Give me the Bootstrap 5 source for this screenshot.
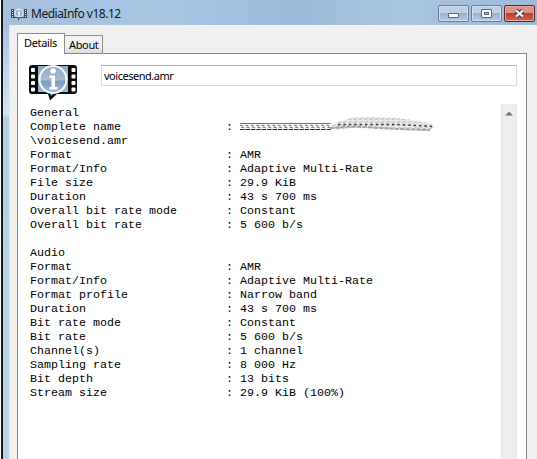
<!DOCTYPE html>
<html lang="en">
<head>
<meta charset="utf-8">
<title>MediaInfo v18.12</title>
<link href="https://cdn.jsdelivr.net/npm/bootstrap@5.3.0/dist/css/bootstrap.min.css" rel="stylesheet">
<style>
body{width:537px;height:459px;font-family:"Noto Sans","Open Sans",sans-serif;color:#000;background:#fff}
.window-frame{height:459px;margin-left:1px;border-left:2px solid #15181f;padding-left:6px;background:linear-gradient(#9fbcdc 0,#a5c0df 25px,#c3d6ec 75px,#d5e3f3 114px,#b4d1e3 117px,#b9d4e7 100%)}
.title-strip{height:25px;margin-left:-6px;padding:0 2px 0 8px;background:linear-gradient(90deg,#a5bfdc,#a8c5e4 28%,#9dbbdc 55%,#a9c4e1 75%,#9dbbd9)}
.title-text{font-size:12px;line-height:16px;margin-left:4px;padding-top:6px;letter-spacing:-.5px;color:#101820}
.caption-buttons{gap:2px;padding-top:5px}
.caption-btn{width:31px;height:17px;border:1px solid #647e9c;border-radius:2px;box-shadow:inset 0 0 0 1px #d0dfef;background:linear-gradient(#bed0e4 48%,#98b2cf 50%,#b5cce4)}
.caption-close{border-color:#5d262b;box-shadow:inset 0 0 0 1px #e6a79c;background:linear-gradient(#dd9487 47%,#bd3e29 50%,#d06a53)}
.client-area{height:434px;background:#f0f0f0;padding:8px 10px 0 7px;border-left:1px solid #e6e8ef}
.tab-strip{height:20px;font-size:11px;line-height:14px;letter-spacing:-.35px}
.sheet-tab{border:1px solid #8b8d90;border-bottom:0}
.tab-details{width:48px;height:21px;background:#fff;padding:2px 0 0 6px;z-index:1}
.tab-about{width:38px;height:18px;margin-top:2px;border-left:0;background:linear-gradient(#f2f2f2 45%,#dedede);padding:2px 0 0 4px}
.sheet{height:406px;border:1px solid #85878a;border-bottom:0;background:#fff;padding:11px 9px 0 11px}
.file-field{width:416px;height:21px;border:1px solid #dcdcdc;border-top-color:#abadb3;border-radius:0;font-size:11px;line-height:18px;padding:0 2px 1px;margin-left:24px;color:#000;letter-spacing:-.47px}
.report-area{height:370px;margin-top:3px}
.report-text{font:11.667px/14px "Liberation Mono","Courier New",monospace;padding:2px 0 0 1px;color:#000}
.report-row{height:14px;white-space:pre}
.report-key{width:196px}
.scroll-track{width:16px;background:#eee;border-left:1px solid #e2e2e2;border-right:1px solid #e7e7e7;padding-top:7px}
.smudge{display:block;margin:-4px 0 0 0}
</style>
<script src="https://cdn.jsdelivr.net/npm/bootstrap@5.3.0/dist/js/bootstrap.bundle.min.js"></script>
</head>
<body class="m-0 overflow-hidden">
<div class="window-frame">
  <header class="title-strip d-flex align-items-start">
    <svg width="16" height="25" viewBox="0 0 16 25" aria-hidden="true">
      <path d="M0 9h16v9H9l-2 3v-3H0z" fill="#414b57"/><path d="M3 9h10v8H3z" fill="#a9b9cd"/>
      <path d="M1.5 10v7M14.5 10v7" stroke="#dfe5ed" stroke-dasharray="1 1"/>
      <ellipse cx="8" cy="13" rx="4" ry="4" fill="#9aacc4" stroke="#e9eef5"/><path d="M8 11v5M8 9v1" stroke="#fff" stroke-width="1.5"/>
    </svg>
    <div class="title-text flex-grow-1">MediaInfo v18.12</div>
    <div class="caption-buttons d-flex">
      <div class="caption-btn d-flex"><svg width="29" height="15"><rect x="9.5" y="7.5" width="10" height="4" rx=".5" fill="#fff" stroke="#5a6577"/></svg></div>
      <div class="caption-btn d-flex"><svg width="29" height="15"><rect x="9.5" y="3.5" width="10" height="8" rx=".5" fill="#fff" stroke="#5a6577"/><rect x="12.5" y="6.5" width="4" height="2" fill="#9fb8d2" stroke="#5a6577"/></svg></div>
      <div class="caption-btn caption-close d-flex"><svg width="29" height="15"><path d="M11 4.5l7 6M18 4.500l-7 6" stroke="#59404d" stroke-width="4.3"/><path d="M11 4.500l7 6M18 4.500l-7 6" stroke="#f5f5f8" stroke-width="2.300"/></svg></div>
    </div>
  </header>
  <main class="client-area">
    <div class="tab-strip d-flex align-items-start">
      <div class="sheet-tab tab-details position-relative">Details</div>
      <div class="sheet-tab tab-about">About</div>
    </div>
    <section class="sheet">
      <div class="d-flex align-items-start">
        <svg width="48" height="36" viewBox="0 0 48 36" class="flex-shrink-0 overflow-visible mb-n3" aria-hidden="true">
          <defs><linearGradient id="glass" x2="0" y2="1"><stop stop-color="#8fa6c0"/><stop offset=".47" stop-color="#a9bed5"/><stop offset=".5" stop-color="#7d9abb"/><stop offset="1" stop-color="#a9c2dc"/></linearGradient></defs>
          <path d="M3 0h42q3 0 3 3v23q0 3-3 3H28l-7 6.500L19 29H3q-3 0-3-3V3q0-3 3-3z" fill="#080a0d"/>
          <path d="M9 1h30v26H26l-4 4-1-4H9z" fill="url(#glass)"/>
          <g fill="#fff"><rect x="2" y="3" width="4" height="4" rx="1"/><rect x="2" y="9.500" width="4" height="4" rx="1"/><rect x="2" y="16" width="4" height="4" rx="1"/><rect x="2" y="22.500" width="4" height="4" rx="1"/><rect x="42.500" y="3" width="4" height="4" rx="1"/><rect x="42.500" y="9.500" width="4" height="4" rx="1"/><rect x="42.500" y="16" width="4" height="4" rx="1"/><rect x="42.500" y="22.500" width="4" height="4" rx="1"/></g>
          <circle cx="24" cy="14.500" r="13.500" fill="none" stroke="#f7fafd" stroke-width="2"/>
          <circle cx="24" cy="6" r="2.800" fill="#fff"/><path d="M20.500 10.500H26V22h2.500v2.500h-8V22H22.500v-9h-2z" fill="#fff"/>
        </svg>
        <input class="form-control file-field flex-shrink-0" value="voicesend.amr" aria-label="File name">
      </div>
      <div class="report-area d-flex justify-content-between">
        <div class="report-text">
          <div class="report-row">General</div>
          <div class="report-row d-flex"><span class="report-key">Complete name</span><span>: </span><svg class="smudge" width="200" height="18" viewBox="0 0 200 18" aria-hidden="true">
            <defs>
              <pattern id="weave" width="5.400" height="7" y="7" patternUnits="userSpaceOnUse"><path d="M0 .5h5.400" stroke="#69737d"/><path d="M0 2.500h3M1 4.500h3" stroke="#718b9c"/><path d="M1 1.500l3 4" stroke="#89745f" stroke-width=".8"/><path d="M0 6.500h4.500" stroke="#24282c"/></pattern>
              <pattern id="grain" width="5.400" height="3" patternUnits="userSpaceOnUse"><path d="M0 .5h2.500M2 2.500h2" stroke="#c0c2c4"/></pattern>
            </defs>
            <path d="M0 7h90l4 3-3 4H0z" fill="url(#weave)"/>
            <path d="M90 11Q102 3 116 1H140Q168 2 192 8l2 3-5 4-34-2-37-2-22 3z" fill="#e9e9ea"/>
            <path d="M90 11Q102 3 116 1H140Q168 2 192 8l2 3-5 4-34-2-37-2-22 3z" fill="url(#grain)"/>
            <path d="M98 8.500h60l34 2" fill="none" stroke="#34373a" stroke-width="1.400" stroke-dasharray="2.400 3"/>
            <path d="M90 12.500Q104 10 122 11t34 2l34 1" fill="none" stroke="#a2a4a7" stroke-width="2" stroke-dasharray="4.400 1"/>
          </svg></div>
          <div class="report-row">\voicesend.amr</div>
          <div class="report-row d-flex"><span class="report-key">Format</span><span>: AMR</span></div>
          <div class="report-row d-flex"><span class="report-key">Format/Info</span><span>: Adaptive Multi-Rate</span></div>
          <div class="report-row d-flex"><span class="report-key">File size</span><span>: 29.9 KiB</span></div>
          <div class="report-row d-flex"><span class="report-key">Duration</span><span>: 43 s 700 ms</span></div>
          <div class="report-row d-flex"><span class="report-key">Overall bit rate mode</span><span>: Constant</span></div>
          <div class="report-row d-flex"><span class="report-key">Overall bit rate</span><span>: 5 600 b/s</span></div>
          <div class="report-row"></div>
          <div class="report-row">Audio</div>
          <div class="report-row d-flex"><span class="report-key">Format</span><span>: AMR</span></div>
          <div class="report-row d-flex"><span class="report-key">Format/Info</span><span>: Adaptive Multi-Rate</span></div>
          <div class="report-row d-flex"><span class="report-key">Format profile</span><span>: Narrow band</span></div>
          <div class="report-row d-flex"><span class="report-key">Duration</span><span>: 43 s 700 ms</span></div>
          <div class="report-row d-flex"><span class="report-key">Bit rate mode</span><span>: Constant</span></div>
          <div class="report-row d-flex"><span class="report-key">Bit rate</span><span>: 5 600 b/s</span></div>
          <div class="report-row d-flex"><span class="report-key">Channel(s)</span><span>: 1 channel</span></div>
          <div class="report-row d-flex"><span class="report-key">Sampling rate</span><span>: 8 000 Hz</span></div>
          <div class="report-row d-flex"><span class="report-key">Bit depth</span><span>: 13 bits</span></div>
          <div class="report-row d-flex"><span class="report-key">Stream size</span><span>: 29.9 KiB (100%)</span></div>
        </div>
        <div class="scroll-track d-flex justify-content-center align-items-start"><svg width="8" height="5"><path d="M0 4.500L4 .5l4 4z" fill="#777"/></svg></div>
      </div>
    </section>
  </main>
</div>
</body>
</html>
